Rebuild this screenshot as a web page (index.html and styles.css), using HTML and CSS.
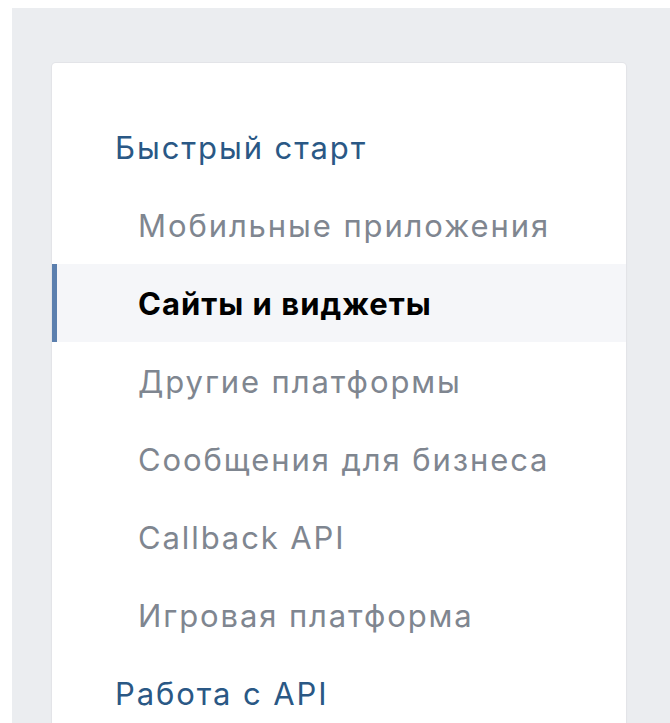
FILE: index.html
```html
<!DOCTYPE html>
<html lang="ru">
<head>
<meta charset="utf-8">
<title>Документация</title>
<link rel="stylesheet" href="styles.css">
</head>
<body>
<div class="page">
  <nav class="sidebar">
    <a class="section" href="#">Быстрый старт</a>
    <a class="item" href="#">Мобильные приложения</a>
    <a class="item active" href="#">Сайты и виджеты</a>
    <a class="item" href="#">Другие платформы</a>
    <a class="item" href="#">Сообщения для бизнеса</a>
    <a class="item" href="#">Callback API</a>
    <a class="item" href="#">Игровая платформа</a>
    <a class="section" href="#">Работа с API</a>
  </nav>
</div>
</body>
</html>
```

FILE: styles.css
```css
html, body {
  margin: 0;
  padding: 0;
  background: #ffffff;
  height: 100%;
  overflow: hidden;
}

.page {
  margin: 8px 0 0 12px;
  padding: 55px 44px 0 40px;
  background: #ebedf0;
  min-height: 715px;
  box-sizing: border-box;
}

.sidebar {
  display: flex;
  flex-direction: column;
  background: #ffffff;
  border-radius: 4px;
  box-shadow: 0 0 0 1px #e3e4e8, 0 1px 3px rgba(0, 0, 0, 0.04);
  padding-top: 45px;
  font-family: Inter, "Liberation Sans", sans-serif;
  font-size: 31px;
  letter-spacing: 1.9px;
}

.section,
.item {
  display: flex;
  align-items: center;
  height: 78px;
  text-decoration: none;
  white-space: nowrap;
}

.section {
  padding-left: 63px;
  color: #2a5885;
}

.item {
  padding-left: 86px;
  color: #7f8690;
}

.item.active {
  background: #f5f6f9;
  color: #000000;
  font-weight: 700;
  letter-spacing: 1px;
  box-shadow: inset 5px 0 0 #5b7fae;
}
```
